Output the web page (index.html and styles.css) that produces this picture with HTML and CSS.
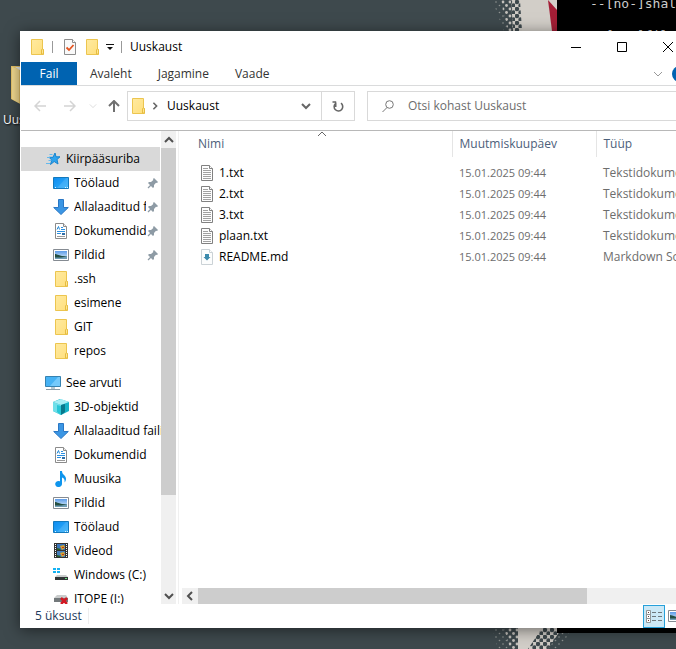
FILE: index.html
```html
<!DOCTYPE html>
<html lang="et">
<head>
<meta charset="utf-8">
<meta name="viewport" content="width=device-width, initial-scale=1">
<title>Uuskaust</title>
<link rel="stylesheet" href="styles.css">
</head>
<body>
<svg class="sprites" aria-hidden="true">
  <defs>
    <linearGradient id="blue" x1="0" y1="0" x2="1" y2="1"><stop offset="0" stop-color="#0c8bf0"/><stop offset="1" stop-color="#35b2fb"/></linearGradient>
    <linearGradient id="yellow" x1="0" y1="0" x2="1" y2="1"><stop offset="0" stop-color="#ffeaa0"/><stop offset="1" stop-color="#ffdf7c"/></linearGradient>
    <linearGradient id="sky" x1="0" y1="0" x2="0" y2="1"><stop offset="0" stop-color="#5c9be8"/><stop offset="1" stop-color="#e0f1fa"/></linearGradient>
    <pattern id="dots-dark" width="7" height="7" patternUnits="userSpaceOnUse"><path d="M0 0h7v7H0z" fill="#cfcbc5"/><circle cx="2" cy="2" r="2.200" fill="#3e494d"/><circle cx="5.500" cy="5.500" r="2.200" fill="#3e494d"/></pattern>
    <pattern id="dots" width="7" height="7" patternUnits="userSpaceOnUse"><circle cx="2" cy="2" r="1.400" fill="#c3c0bb"/><circle cx="5.500" cy="5.500" r="1.400" fill="#c3c0bb"/></pattern>
    <pattern id="dots-small" width="7" height="7" patternUnits="userSpaceOnUse"><circle cx="2" cy="2" r=".8" fill="#8f9391"/><circle cx="5.500" cy="5.500" r=".8" fill="#8f9391"/></pattern>
    <symbol id="folder" viewBox="0 0 16 16"><path d="M2.500.5h11v10h1v5h-12z" fill="url(#yellow)" stroke="#ecc54f"/><path d="M12.500 15v-4l1-1.500 1 1.500v4z" fill="#ffe591" stroke="#e6bd41"/></symbol>
    <symbol id="star" viewBox="0 0 16 16"><path d="M10 2l1 3.800h4l-3 2.700 1 4.500-3.800-2.500L5.500 13.500l1.300-4.500L4 6.300h4z" fill="#2fa4ee" stroke="#1684cf"/><path d="M4.500 3.500h3M2 6.500h3M3.500 9.500h3M1 12.500h4" stroke="#62b9ee"/></symbol>
    <symbol id="desktop" viewBox="0 0 16 16"><path d="M.5 2.500h15v11H.5z" fill="url(#blue)" stroke="#1379bd"/><path d="M4 13L13 3h2v10z" fill="#fff" opacity=".12"/><path d="M2 12.500h1M12 12.500h1M14 12.500h1" stroke="#d9f1ff"/></symbol>
    <symbol id="down" viewBox="0 0 16 16"><path d="M5.500.5h5v8h4.800L8 15.500.7 8.500h4.800z" fill="#3b96e4" stroke="#2a77c4"/></symbol>
    <symbol id="doc" viewBox="0 0 16 16"><path d="M2.500.5h8l3 3v12h-11z" fill="#fff" stroke="#8b8b8b"/><path d="M10.500.5v3h3" fill="#eee" stroke="#8b8b8b"/><path d="M4 6.500l1.500-3 1 3" fill="none" stroke="#2187d5"/><path d="M8 4.500h2M8 6.500h4M4 8.500h8M4 10.500h4" stroke="#2b8fe0"/><path d="M9 10h3v2H9z" fill="#2f6ea8"/><path d="M4 13.500h8" stroke="#999"/></symbol>
    <symbol id="picture" viewBox="0 0 16 16"><path d="M.5 2.500h15v11H.5z" fill="#fff" stroke="#858b92"/><path d="M2 4h12v8H2z" fill="url(#sky)"/><path d="M2 9h12v3H2z" fill="#6f9db5"/><path d="M2 7c2 0 4 2 12 2.500L8 10.500H2z" fill="#244f42"/></symbol>
    <symbol id="computer" viewBox="0 0 16 16"><path d="M.5 1.500h15v10H.5z" fill="#46b2f4" stroke="#3682b0"/><path d="M5 11L13 2h2v9z" fill="#92d8ff" opacity=".6"/><path d="M6 12h4v2H6z" fill="#b6c7d1"/><path d="M1 14.500h14" stroke="#8b9da8"/></symbol>
    <symbol id="cube" viewBox="0 0 16 16"><path d="M0 3l7-3 9 3v9l-8 4-8-4z" fill="#17b2c6"/><path d="M0 3l8 3v10l-8-4z" fill="#6fdfe9"/><path d="M0 3l8-3 8 3-8 3z" fill="#a8eef5"/><path d="M8 6l4-1v8l-4 3z" fill="#08788c"/><path d="M4 6l4 1v9l-4-3z" fill="#28c6d6"/></symbol>
    <symbol id="music" viewBox="0 0 16 16"><path d="M7 0h2c0 4 4 4 4 8 0 1-.5 2.500-1.500 3.500.5-3-.5-4.500-2.500-5V13a3.400 3 0 1 1-2-2.700z" fill="#0e95ed"/></symbol>
    <symbol id="film" viewBox="0 0 16 16"><path d="M1 0h14v15H1z" fill="#333"/><path d="M2.500 1v14M13.500 1v14" stroke="#fff" stroke-dasharray="1 1"/><path d="M4 1h8v6H4z" fill="#3a75b8"/><path d="M4 8h8v6H4z" fill="#4680bd"/><path d="M7 3l4-1 1 3-3 2zM7 10l4-1 1 3-3 2z" fill="#d8a32b"/><path d="M4 5l4 1-1 1H4zM4 12l4 1-1 1H4z" fill="#295d2d"/><path d="M9 4h2v1H9zM9 11h2v1H9z" fill="#b9342c"/></symbol>
    <symbol id="drive" viewBox="0 0 16 16"><path d="M0 1h3v2H0zM4 1h3v2H4zM0 4h3v2H0zM4 4h3v2H4z" fill="#14b2f3"/><path d="M4 8h9l2 2H2z" fill="#c9cccc"/><path d="M2 10h13v3H2z" fill="#313638"/><path d="M12 11h2v1h-2z" fill="#63e079"/></symbol>
    <symbol id="drive-off" viewBox="0 0 16 16"><path d="M4 4h9l2 3H1z" fill="#c9cccc"/><path d="M1 7h14v4H1z" fill="#73797b"/><path d="M8 7l6 6M14 7l-6 6" stroke="#d31823" stroke-width="2.500"/></symbol>
    <symbol id="pin" viewBox="0 0 12 12"><path d="M7 1l4 4-1 1-1-.3L7 8v2L6 11 1 6l1-1h2l2.300-2L6 2z" fill="#8e9ba5"/><path d="M4 8l-3 3" stroke="#8e9ba5" stroke-width="1.300"/></symbol>
    <symbol id="text" viewBox="0 0 16 16"><path d="M2.500.5h8l3 3v12h-11z" fill="#fdfdfd" stroke="#818181"/><path d="M10.500.5v3h3" fill="#fff" stroke="#818181"/><path d="M4 3.500h5M4 5.500h8M4 7.500h8M4 9.500h8M4 11.500h8M4 13.500h8" stroke="#a1a1a1"/></symbol>
    <symbol id="md" viewBox="0 0 16 16"><path d="M2.500.5h8l3 3v12h-11z" fill="#fcfdfd" stroke="#cbd2d6"/><path d="M10.500.5v3h3" fill="#fff" stroke="#cbd2d6"/><path d="M6 5h4v3h1.500L8 11.500 4.500 8H6z" fill="#3d8bad"/></symbol>
    <symbol id="check-doc" viewBox="0 0 16 16"><path d="M2.500.5h8l3 3v12h-11z" fill="#f9f9f9" stroke="#8d8d8d"/><path d="M10.500.5v3h3" fill="#fff" stroke="#8d8d8d"/><path d="M4.500 8.500l2.500 2.500 4.500-5" fill="none" stroke="#e45420" stroke-width="1.800"/></symbol>
    <symbol id="chev-down" viewBox="0 0 10 10"><path d="M1 3l4 4 4-4" fill="none" stroke="currentColor"/></symbol>
    <symbol id="chev-up" viewBox="0 0 10 10"><path d="M1 7l4-4 4 4" fill="none" stroke="currentColor"/></symbol>
    <symbol id="chev-left" viewBox="0 0 10 10"><path d="M7 1L3 5l4 4" fill="none" stroke="currentColor"/></symbol>
    <symbol id="chev-right" viewBox="0 0 10 10"><path d="M3 1l4 4-4 4" fill="none" stroke="currentColor"/></symbol>
  </defs>
</svg>

<div class="wallpaper" aria-hidden="true">
  <svg class="art art-top" viewBox="0 0 120 31">
    <path d="M12 0h15l10 31H24z" fill="url(#dots-small)"/><path d="M21 0h13v31h-6z" fill="url(#dots)"/><path d="M31 0h11v31h-9z" fill="url(#dots-dark)"/><path d="M40 0h40v31H42z" fill="#d2cec8"/><path d="M68 0l9 10v21h-5z" fill="#a41e36"/>
  </svg>
  <svg class="art art-bottom" viewBox="0 0 120 21">
    <path d="M12 0h20v21H18z" fill="url(#dots-small)"/><path d="M24 0h16v21H30z" fill="url(#dots)"/><path d="M76 0h16L80 21H66z" fill="url(#dots-small)"/><path d="M60 0h22L68 21H46z" fill="url(#dots-dark)"/><path d="M38 0h24L48 21H38z" fill="#d2cec8"/>
  </svg>
</div>

<div class="shortcut">
  <svg class="shortcut-icon" viewBox="0 0 40 42" aria-hidden="true"><path d="M0 0h34v40H13L0 33z" fill="#e9c66b"/><path d="M1 1l7 2v34l-7-4z" fill="#f5dc91"/><path d="M4 1h8v5z" fill="#e8eef2"/></svg>
  <span>Uuskaust</span>
</div>

<pre class="terminal">--[no-]shallow-submodules

--[no-]filter</pre>

<main class="window">
  <header class="titlebar">
    <div class="quick">
      <svg class="icon"><use href="#folder"/></svg>
      <span class="rule"></span>
      <button aria-label="Atribuudid"><svg class="icon"><use href="#check-doc"/></svg></button>
      <button aria-label="Uus kaust"><svg class="icon"><use href="#folder"/></svg></button>
      <button aria-label="Kohanda"><svg class="more" viewBox="0 0 8 8"><path d="M0 1.500h8" stroke="#111"/><path d="M1 4h6L4 7z" fill="#111"/></svg></button>
      <span class="rule"></span>
    </div>
    <h1>Uuskaust</h1>
    <div class="caption">
      <button aria-label="Minimeeri"><svg viewBox="0 0 10 10"><path d="M0 5.500h10" stroke="#000"/></svg></button>
      <button aria-label="Maksimeeri"><svg viewBox="0 0 10 10"><path d="M.5.5h9v9h-9z" fill="none" stroke="#000"/></svg></button>
      <button aria-label="Sule"><svg viewBox="0 0 10 10"><path d="M0 0l10 10M10 0L0 10" stroke="#000"/></svg></button>
    </div>
  </header>

  <nav class="ribbon">
    <button class="tab tab-file">Fail</button>
    <button class="tab">Avaleht</button>
    <button class="tab">Jagamine</button>
    <button class="tab">Vaade</button>
    <div class="ribbon-end">
      <button aria-label="Laienda lint"><svg class="chev"><use href="#chev-down"/></svg></button>
      <button class="help" aria-label="Spikker"></button>
    </div>
  </nav>

  <div class="toolbar">
    <div class="history">
      <button aria-label="Tagasi" disabled><svg viewBox="0 0 12 12"><path d="M12 6H1M6 1L1 6l5 5" fill="none" stroke="currentColor" stroke-width="1.500"/></svg></button>
      <button aria-label="Edasi" disabled><svg viewBox="0 0 12 12"><path d="M0 6h11M6 1l5 5-5 5" fill="none" stroke="currentColor" stroke-width="1.500"/></svg></button>
      <button class="recent" aria-label="Hiljutised" disabled><svg class="small"><use href="#chev-down"/></svg></button>
      <button class="up" aria-label="Üles"><svg viewBox="0 0 12 12"><path d="M6 12V1M1 6l5-5 5 5" fill="none" stroke="currentColor" stroke-width="2"/></svg></button>
    </div>
    <div class="address">
      <svg class="icon"><use href="#folder"/></svg>
      <svg class="small bold"><use href="#chev-right"/></svg>
      <button class="crumb">Uuskaust</button>
      <button class="drop" aria-label="Eelmised asukohad"><svg class="chev bold"><use href="#chev-down"/></svg></button>
      <button class="refresh" aria-label="Värskenda"><svg viewBox="0 0 12 12"><path d="M9 3.200a4.300 4.300 0 1 1-5.500.3M3.700 7V2.500M.5 2H4.200" fill="none" stroke="currentColor" stroke-width="1.600"/><path d="M6 1.500h4.500V6" fill="none" stroke="currentColor" stroke-width="0"/></svg></button>
    </div>
    <label class="search">
      <svg viewBox="0 0 12 12"><circle cx="7.500" cy="4.500" r="3.800" fill="none" stroke="currentColor"/><path d="M5 7.500L.5 12" stroke="currentColor"/></svg>
      <input type="search" aria-label="Otsing" placeholder="Otsi kohast Uuskaust">
    </label>
  </div>

  <div class="content">
    <aside class="tree">
      <ul>
        <li class="root selected"><svg class="icon"><use href="#star"/></svg><a href="#">Kiirpääsuriba</a></li>
        <li><svg class="icon"><use href="#desktop"/></svg><a href="#">Töölaud</a><svg class="pin"><use href="#pin"/></svg></li>
        <li><svg class="icon"><use href="#down"/></svg><a href="#">Allalaaditud failid</a><svg class="pin"><use href="#pin"/></svg></li>
        <li><svg class="icon"><use href="#doc"/></svg><a href="#">Dokumendid</a><svg class="pin"><use href="#pin"/></svg></li>
        <li><svg class="icon"><use href="#picture"/></svg><a href="#">Pildid</a><svg class="pin"><use href="#pin"/></svg></li>
        <li><svg class="icon"><use href="#folder"/></svg><a href="#">.ssh</a></li>
        <li><svg class="icon"><use href="#folder"/></svg><a href="#">esimene</a></li>
        <li><svg class="icon"><use href="#folder"/></svg><a href="#">GIT</a></li>
        <li><svg class="icon"><use href="#folder"/></svg><a href="#">repos</a></li>
      </ul>
      <ul>
        <li class="root"><svg class="icon"><use href="#computer"/></svg><a href="#">See arvuti</a></li>
        <li><svg class="icon"><use href="#cube"/></svg><a href="#">3D-objektid</a></li>
        <li><svg class="icon"><use href="#down"/></svg><a href="#">Allalaaditud failid</a></li>
        <li><svg class="icon"><use href="#doc"/></svg><a href="#">Dokumendid</a></li>
        <li><svg class="icon"><use href="#music"/></svg><a href="#">Muusika</a></li>
        <li><svg class="icon"><use href="#picture"/></svg><a href="#">Pildid</a></li>
        <li><svg class="icon"><use href="#desktop"/></svg><a href="#">Töölaud</a></li>
        <li><svg class="icon"><use href="#film"/></svg><a href="#">Videod</a></li>
        <li><svg class="icon"><use href="#drive"/></svg><a href="#">Windows (C:)</a></li>
        <li><svg class="icon"><use href="#drive-off"/></svg><a href="#">ITOPE (I:)</a></li>
      </ul>
    </aside>
    <div class="vbar" aria-hidden="true">
      <svg><use href="#chev-up"/></svg>
      <div class="track"><div class="thumb"></div></div>
      <svg><use href="#chev-down"/></svg>
    </div>
    <section class="files">
      <svg class="sort" aria-hidden="true"><use href="#chev-up"/></svg>
      <table>
        <colgroup><col class="col-name"><col class="col-date"><col></colgroup>
        <thead><tr><th>Nimi</th><th>Muutmiskuupäev</th><th>Tüüp</th></tr></thead>
        <tbody>
          <tr><td><svg class="icon"><use href="#text"/></svg>1.txt</td><td class="date">15.01.2025 09:44</td><td>Tekstidokument</td></tr>
          <tr><td><svg class="icon"><use href="#text"/></svg>2.txt</td><td class="date">15.01.2025 09:44</td><td>Tekstidokument</td></tr>
          <tr><td><svg class="icon"><use href="#text"/></svg>3.txt</td><td class="date">15.01.2025 09:44</td><td>Tekstidokument</td></tr>
          <tr><td><svg class="icon"><use href="#text"/></svg>plaan.txt</td><td class="date">15.01.2025 09:44</td><td>Tekstidokument</td></tr>
          <tr><td><svg class="icon"><use href="#md"/></svg>README.md</td><td class="date">15.01.2025 09:44</td><td>Markdown Source File</td></tr>
        </tbody>
      </table>
      <div class="hbar" aria-hidden="true">
        <svg><use href="#chev-left"/></svg>
        <div class="track"><div class="thumb"></div></div>
      </div>
    </section>
  </div>

  <footer class="status">
    <span class="count">5 üksust</span>
    <div class="views">
      <button class="view active" aria-label="Üksikasjad"><svg class="icon" viewBox="0 0 16 16"><path d="M.5 2.500h4v4h-4zM.5 6.500h4v4h-4zM.5 10.500h4v4h-4z" fill="#fff" stroke="#8f9699"/><path d="M6 4.500h4M12 4.500h4M6 8.500h4M12 8.500h4M6 12.500h4M12 12.500h4" stroke="#6d777c"/><path d="M2 4h1v1H2zM2 8h1v1H2zM2 12h1v1H2z" fill="#713b30"/></svg></button>
      <button class="view" aria-label="Suured ikoonid"><svg class="icon"><use href="#picture"/></svg></button>
    </div>
  </footer>
</main>
</body>
</html>
```
FILE: styles.css
```css
* { box-sizing: border-box; }

body {
  margin: 0;
  height: 100vh;
  overflow: hidden;
  position: relative;
  background: #3e494d;
  font: 12px/16px "Open Sans", "Noto Sans", sans-serif;
  color: #000;
}

button {
  display: flex;
  align-items: center;
  justify-content: center;
  padding: 0;
  border: 0;
  background: none;
  font: inherit;
  color: inherit;
}

a { color: inherit; text-decoration: none; }
svg { display: block; flex: none; }
.sprites { position: absolute; width: 0; height: 0; }
.icon { width: 16px; height: 16px; }
.chev { width: 10px; height: 10px; }
.small { width: 8px; height: 8px; }
.bold { stroke-width: 2px; }

/* Desktop */
.art { position: absolute; left: 480px; width: 120px; }
.art-top { top: 0; height: 31px; }
.art-bottom { bottom: 0; height: 21px; }

.shortcut {
  position: absolute;
  top: 66px;
  left: 3px;
  color: #fff;
  text-shadow: 1px 1px 2px #000;
}
.shortcut-icon { width: 40px; height: 42px; margin: 0 0 4px 8px; }

.terminal {
  position: absolute;
  top: -4px;
  right: 0;
  bottom: 16px;
  left: 557px;
  margin: 0;
  padding-left: 33px;
  overflow: hidden;
  background: #000;
  color: #ccc;
  font: 13px/16px "DejaVu Sans Mono", monospace;
}

/* Explorer window */
.window {
  position: absolute;
  top: 31px;
  right: -15px;
  bottom: 21px;
  left: 20px;
  display: flex;
  flex-direction: column;
  padding-left: 1px;
  background: #fff;
  box-shadow: 0 2px 14px rgba(0, 0, 0, .5);
}

.titlebar { display: flex; flex: none; height: 31px; }
.quick { display: flex; align-items: center; padding-left: 8px; }
.quick .rule { width: 1px; height: 12px; background: #999; }
.quick .icon + .rule { margin: 0 9px 0 7px; }
.quick button { margin-right: 6px; }
.quick .more { margin-right: 1px; }
.more { width: 8px; height: 8px; }
h1 { margin: 0; padding-left: 8px; font: inherit; line-height: 31px; }
.caption { display: flex; margin-left: auto; }
.caption button { width: 46px; }
.caption svg { width: 10px; height: 10px; }

.ribbon { display: flex; flex: none; height: 24px; border-bottom: 1px solid #dadbdc; color: #333; }
.tab { padding: 0 13px; }
.tab-file { width: 56px; background: #0063b1; color: #fff; }
.ribbon-end { display: flex; align-items: center; gap: 9px; margin-left: auto; padding-right: 3px; color: #999; }
.help { width: 16px; height: 16px; border-radius: 50%; background: #0063b1; }

.toolbar { display: flex; flex: none; align-items: center; height: 45px; padding: 5px 0 9px; border-bottom: 1px solid #b8b8b8; }
.history { display: flex; align-items: center; width: 106px; padding-left: 13px; gap: 18px; color: #707070; }
.history button:disabled { color: #d4d4d4; }
.history svg { width: 12px; height: 12px; }
.history .small { width: 8px; height: 8px; }
.history .recent { margin-right: -7px; margin-left: -5px; }
.address { display: flex; align-items: center; width: 228px; height: 30px; padding-left: 2px; border: 1px solid #d9d9d9; color: #666; }
.address .small { margin: 0 8px 0 5px; }
.crumb { color: #000; }
.drop { width: 30px; margin-left: auto; }
.refresh { width: 33px; height: 28px; border-left: 1px solid #d9d9d9; }
.refresh svg { width: 12px; height: 12px; }
.search { display: flex; flex: 1; align-items: center; gap: 14px; height: 30px; margin: 0 8px 0 12px; padding-left: 14px; border: 1px solid #d9d9d9; color: #777; }
.search svg { width: 12px; height: 12px; }
.search input { flex: 1; min-width: 0; padding: 0; border: 0; outline: 0; background: none; font: inherit; }
.search input::placeholder { color: #6d6d6d; opacity: 1; }

.content { display: flex; flex: 1; min-height: 0; }

.tree { width: 140px; padding-top: 16px; overflow: hidden; }
.tree ul { margin: 0 0 8px; padding: 0; list-style: none; }
.tree li { display: flex; align-items: center; gap: 5px; height: 24px; padding-left: 32px; }
.tree .root { padding-left: 24px; }
.tree .selected { width: 139px; background: #d9d9d9; }
.tree a { flex: 1; min-width: 0; overflow: hidden; white-space: nowrap; }
.pin { width: 12px; height: 12px; margin: 0 2px 0 -4px; }

.vbar { display: flex; flex-direction: column; align-items: center; width: 15px; background: #f0f0f0; color: #505050; }
.vbar svg, .hbar svg { width: 10px; height: 10px; stroke-width: 2px; }
.vbar svg { margin: 4px 0 3px; }
.track { flex: 1; min-height: 0; }
.thumb { background: #cdcdcd; }
.vbar .track { width: 100%; }
.vbar .thumb { height: 79%; }

.files { position: relative; display: flex; flex: 1; flex-direction: column; min-width: 0; margin-left: 2px; padding-left: 3px; border-left: 1px solid #f0f0f0; }
.sort { position: absolute; top: -2px; left: 138px; width: 10px; height: 10px; color: #666; }

table { width: 100%; table-layout: fixed; border-collapse: collapse; color: #6d6d6d; }
.col-name { width: 270px; }
.col-date { width: 144px; }
th { height: 26px; padding: 0 7px; border-right: 1px solid #e5e5e5; font-weight: normal; text-align: left; color: #4c607a; }
th:first-child { padding-left: 16px; }
tbody::before { content: ""; display: block; height: 5px; }
td { height: 21px; padding: 0 7px; overflow: hidden; white-space: nowrap; }
td:first-child { padding-left: 17px; color: #000; }
.date { font-size: 11px; }
td .icon { display: inline-block; margin-right: 4px; vertical-align: -4px; }

.hbar { display: flex; align-items: center; height: 16px; margin-top: auto; background: #f0f0f0; color: #505050; }
.hbar svg { margin: 0 3px; }
.hbar .track, .hbar .thumb { height: 100%; }
.hbar .thumb { width: 79%; }

.status { display: flex; flex: none; align-items: center; height: 24px; padding: 0 4px 0 14px; color: #1e395b; }
.count { padding-right: 6px; border-right: 1px solid #eee; }
.views { display: flex; margin-left: auto; }
.view { width: 22px; height: 23px; }
.view.active { border: 1px solid #26a0da; background: #cbe8f6; }
```
